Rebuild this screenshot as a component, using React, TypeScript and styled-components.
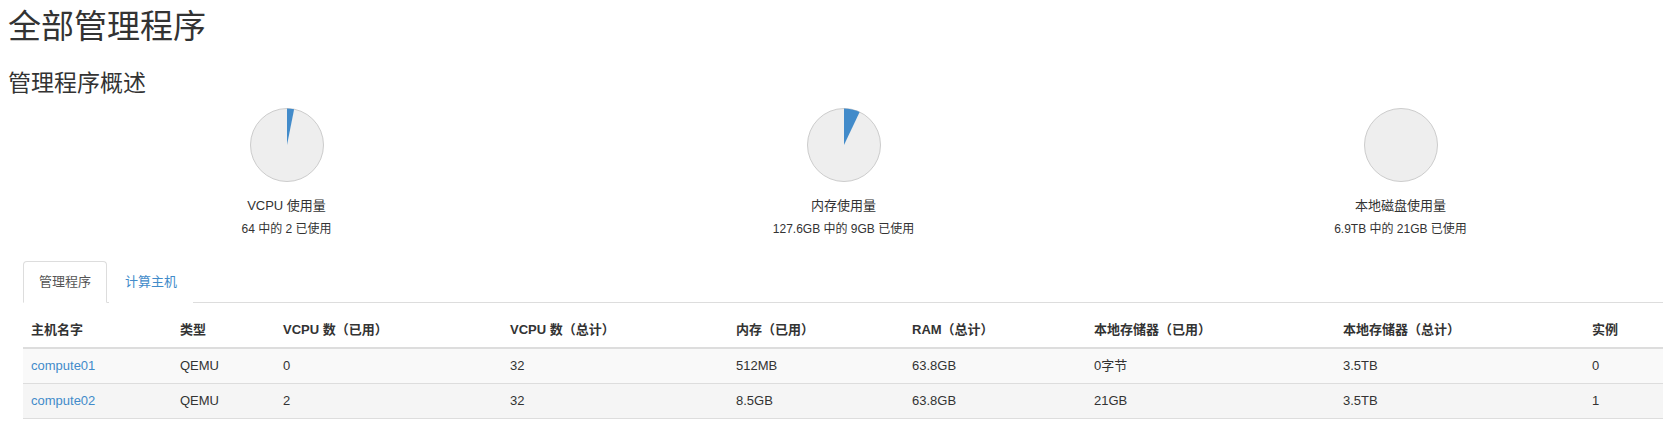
import React from "react";
import styled, { createGlobalStyle } from "styled-components";

const GlobalStyle = createGlobalStyle`
  html, body {
    margin: 0;
    padding: 0;
    background: #fff;
    overflow-x: hidden;
  }
  body {
    font-family: "Liberation Sans", "Noto Sans CJK SC", sans-serif;
    color: #333;
    font-size: 13px;
  }
  * { box-sizing: border-box; }
`;

const Page = styled.div`
  width: 1679px;
  padding-left: 8px;
  box-sizing: border-box;
`;

const Title = styled.h1`
  margin: 9px 0 0;
  font-size: 33px;
  line-height: 36px;
  font-weight: 400;
  color: #333;
`;

const SubTitle = styled.h3`
  margin: 25px 0 0;
  font-size: 23px;
  line-height: 26px;
  font-weight: 400;
  color: #333;
`;

const PieRow = styled.div`
  display: grid;
  grid-template-columns: repeat(3, 557px);
  margin-top: 11px;
`;

const PieCell = styled.div`
  display: flex;
  flex-direction: column;
  align-items: center;
`;

const PieLabel = styled.div`
  margin-top: 14px;
  font-size: 13px;
  line-height: 18px;
  color: #333;
`;

const PieSub = styled.div`
  margin-top: 5px;
  font-size: 12px;
  line-height: 18px;
  color: #333;
`;

const Section = styled.div`
  margin-top: 23px;
  padding: 0 15px;
`;

const Nav = styled.ul`
  display: flex;
  margin: 0;
  padding: 0;
  list-style: none;
  border-bottom: 1px solid #ddd;
`;

const TabItem = styled.li<{ $active?: boolean }>`
  margin-right: 2px;
  margin-bottom: -1px;
  padding: 10px 15px;
  font-size: 13px;
  line-height: 20px;
  border: 1px solid ${(p) => (p.$active ? "#ddd" : "transparent")};
  border-bottom-color: transparent;
  border-radius: 4px 4px 0 0;
  background: #fff;
  color: ${(p) => (p.$active ? "#555" : "#428bca")};
  cursor: pointer;
`;

const Table = styled.table`
  margin-top: 10px;
  width: 100%;
  border-collapse: collapse;
  border-spacing: 0;
  table-layout: fixed;
`;

const Th = styled.th`
  padding: 8px;
  font-size: 13px;
  line-height: 18px;
  font-weight: 700;
  text-align: left;
  color: #333;
  border-bottom: 2px solid #ddd;
  white-space: nowrap;
`;

const Tr = styled.tr<{ $bg: string }>`
  background: ${(p) => p.$bg};
`;

const Td = styled.td`
  padding: 8px;
  font-size: 13px;
  line-height: 18px;
  color: #333;
  border-bottom: 1px solid #ddd;
  white-space: nowrap;
`;

const HostLink = styled.a`
  color: #428bca;
  text-decoration: none;
`;

function Pie({ used, total }: { used: number; total: number }) {
  const c = 38;
  const r = 36.5;
  const frac = total > 0 ? used / total : 0;
  const a = frac * 2 * Math.PI;
  const x = c + r * Math.sin(a);
  const y = c - r * Math.cos(a);
  const large = frac > 0.5 ? 1 : 0;
  return (
    <svg width="76" height="76" viewBox="0 0 76 76">
      <circle cx={c} cy={c} r={r} fill="#eeeeee" stroke="#cccccc" strokeWidth="1" />
      {frac > 0.002 && (
        <path
          d={`M ${c} ${c} L ${c} ${c - r} A ${r} ${r} 0 ${large} 1 ${x} ${y} Z`}
          fill="#428bca"
        />
      )}
    </svg>
  );
}

const pies = [
  { label: "VCPU 使用量", sub: "64 中的 2 已使用", used: 2, total: 64 },
  { label: "内存使用量", sub: "127.6GB 中的 9GB 已使用", used: 9, total: 127.6 },
  { label: "本地磁盘使用量", sub: "6.9TB 中的 21GB 已使用", used: 0, total: 1 },
];

const columns = [
  { title: "主机名字", width: 149 },
  { title: "类型", width: 103 },
  { title: "VCPU 数（已用）", width: 227 },
  { title: "VCPU 数（总计）", width: 226 },
  { title: "内存（已用）", width: 176 },
  { title: "RAM（总计）", width: 182 },
  { title: "本地存储器（已用）", width: 249 },
  { title: "本地存储器（总计）", width: 249 },
  { title: "实例", width: 80 },
];

const rows = [
  ["compute01", "QEMU", "0", "32", "512MB", "63.8GB", "0字节", "3.5TB", "0"],
  ["compute02", "QEMU", "2", "32", "8.5GB", "63.8GB", "21GB", "3.5TB", "1"],
];

const rowBg = ["#f9f9f9", "#f5f5f5"];

export default function App() {
  return (
    <>
      <GlobalStyle />
      <Page>
        <Title>全部管理程序</Title>
        <SubTitle>管理程序概述</SubTitle>
        <PieRow>
          {pies.map((p) => (
            <PieCell key={p.label}>
              <Pie used={p.used} total={p.total} />
              <PieLabel>{p.label}</PieLabel>
              <PieSub>{p.sub}</PieSub>
            </PieCell>
          ))}
        </PieRow>
        <Section>
          <Nav>
            <TabItem $active>管理程序</TabItem>
            <TabItem>计算主机</TabItem>
          </Nav>
          <Table>
            <colgroup>
              {columns.map((c) => (
                <col key={c.title} style={{ width: c.width }} />
              ))}
            </colgroup>
            <thead>
              <tr>
                {columns.map((c) => (
                  <Th key={c.title}>{c.title}</Th>
                ))}
              </tr>
            </thead>
            <tbody>
              {rows.map((r, i) => (
                <Tr key={r[0]} $bg={rowBg[i % 2]}>
                  {r.map((v, j) => (
                    <Td key={j}>{j === 0 ? <HostLink href="#">{v}</HostLink> : v}</Td>
                  ))}
                </Tr>
              ))}
            </tbody>
          </Table>
        </Section>
      </Page>
    </>
  );
}
